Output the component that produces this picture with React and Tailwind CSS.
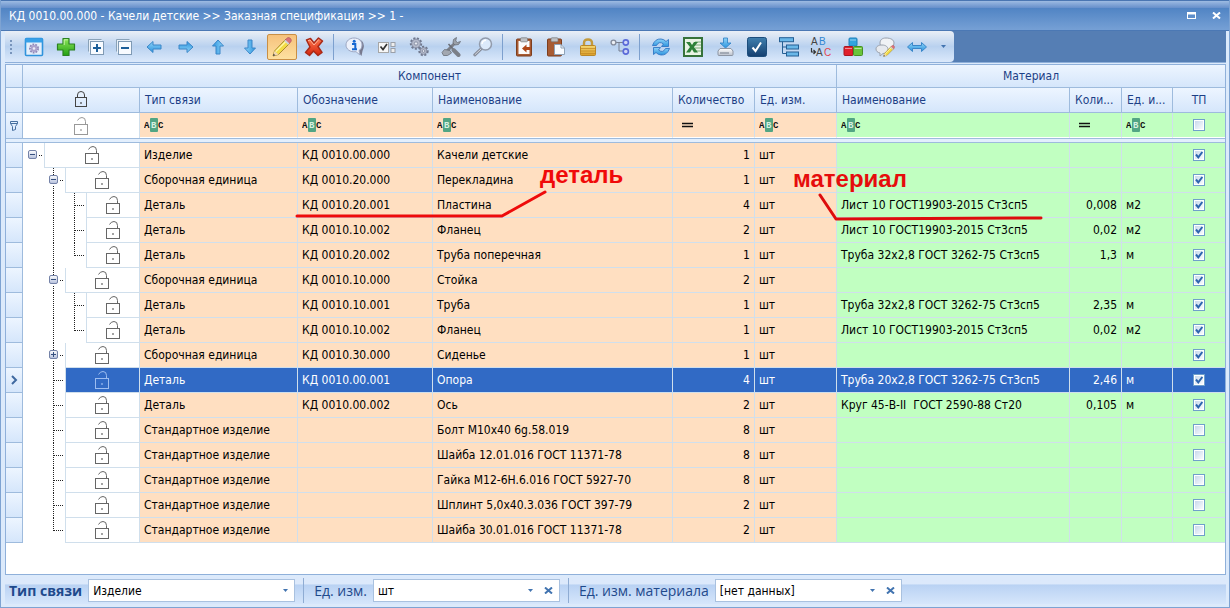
import React, { useState } from "react";

const COLUMNS = [17, 117, 158, 135, null, 82, 82, 233, 52, 51, 52];

const ROWS = [
  { tree: ["minus0"], type: "Изделие", code: "КД 0010.00.000", name: "Качели детские", qty: 1, done: true },
  { tree: ["blank", "minus"], type: "Сборочная единица", code: "КД 0010.20.000", name: "Перекладина", qty: 1, done: true },
  { tree: ["blank", "line", "tee"], type: "Деталь", code: "КД 0010.20.001", name: "Пластина", qty: 4, material: "Лист 10 ГОСТ19903-2015 Ст3сп5", amount: "0,008", unit: "м2", done: true },
  { tree: ["blank", "line", "tee"], type: "Деталь", code: "КД 0010.10.002", name: "Фланец", qty: 2, material: "Лист 10 ГОСТ19903-2015 Ст3сп5", amount: "0,02", unit: "м2", done: true },
  { tree: ["blank", "line", "elbow"], type: "Деталь", code: "КД 0010.20.002", name: "Труба поперечная", qty: 1, material: "Труба 32x2,8 ГОСТ 3262-75 Ст3сп5", amount: "1,3", unit: "м", done: true },
  { tree: ["blank", "minus"], type: "Сборочная единица", code: "КД 0010.10.000", name: "Стойка", qty: 2, done: true },
  { tree: ["blank", "line", "tee"], type: "Деталь", code: "КД 0010.10.001", name: "Труба", qty: 1, material: "Труба 32x2,8 ГОСТ 3262-75 Ст3сп5", amount: "2,35", unit: "м", done: true },
  { tree: ["blank", "line", "elbow"], type: "Деталь", code: "КД 0010.10.002", name: "Фланец", qty: 1, material: "Лист 10 ГОСТ19903-2015 Ст3сп5", amount: "0,02", unit: "м2", done: true },
  { tree: ["blank", "plus"], type: "Сборочная единица", code: "КД 0010.30.000", name: "Сиденье", qty: 1, done: true },
  { tree: ["blank", "tee"], type: "Деталь", code: "КД 0010.00.001", name: "Опора", qty: 4, material: "Труба 20x2,8 ГОСТ 3262-75 Ст3сп5", amount: "2,46", unit: "м", done: true },
  { tree: ["blank", "tee"], type: "Деталь", code: "КД 0010.00.002", name: "Ось", qty: 2, material: "Круг 45-В-II  ГОСТ 2590-88 Ст20", amount: "0,105", unit: "м", done: true },
  { tree: ["blank", "tee"], type: "Стандартное изделие", name: "Болт М10x40 6g.58.019", qty: 8 },
  { tree: ["blank", "tee"], type: "Стандартное изделие", name: "Шайба 12.01.016 ГОСТ 11371-78", qty: 8 },
  { tree: ["blank", "tee"], type: "Стандартное изделие", name: "Гайка М12-6H.6.016 ГОСТ 5927-70", qty: 8 },
  { tree: ["blank", "tee"], type: "Стандартное изделие", name: "Шплинт 5,0x40.3.036 ГОСТ 397-79", qty: 2 },
  { tree: ["blank", "elbow"], type: "Стандартное изделие", name: "Шайба 30.01.016 ГОСТ 11371-78", qty: 2 },
];

const Gradients = () => (
  <svg width="0" height="0" className="absolute" aria-hidden="true">
    <defs>
      <linearGradient id="blue" x1="0" y1="0" x2="0" y2="1">
        <stop offset="0" stopColor="#8fd4f8" />
        <stop offset="1" stopColor="#2b93de" />
      </linearGradient>
      <linearGradient id="green" x1="0" y1="0" x2="0" y2="1">
        <stop offset="0" stopColor="#8ee65a" />
        <stop offset="1" stopColor="#22a012" />
      </linearGradient>
      <linearGradient id="red" x1="0" y1="0" x2="0" y2="1">
        <stop offset="0" stopColor="#ff7a52" />
        <stop offset="1" stopColor="#d4240c" />
      </linearGradient>
      <linearGradient id="gold" x1="0" y1="0" x2="0" y2="1">
        <stop offset="0" stopColor="#f5d873" />
        <stop offset="1" stopColor="#d99d28" />
      </linearGradient>
      <linearGradient id="navy" x1="0" y1="0" x2="0" y2="1">
        <stop offset="0" stopColor="#3f7fae" />
        <stop offset="1" stopColor="#143f70" />
      </linearGradient>
      <linearGradient id="silver" x1="0" y1="0" x2="0" y2="1">
        <stop offset="0" stopColor="#ffffff" />
        <stop offset="1" stopColor="#b9c0cc" />
      </linearGradient>
      <linearGradient id="knob" x1="0" y1="0" x2="0" y2="1">
        <stop offset="0" stopColor="#ffffff" />
        <stop offset="1" stopColor="#b4bfdc" />
      </linearGradient>
    </defs>
  </svg>
);

const Icon = ({ children }) => (
  <svg width="20" height="20" viewBox="0 0 20 20" fill="none" aria-hidden="true">
    {children}
  </svg>
);

const ARROW = "M3 10 L9 4.5 V8 H17 V12 H9 V15.500 Z";

const Arrow = ({ turn }) => (
  <Icon>
    <path d={ARROW} transform={`rotate(${turn} 10 10)`} fill="url(#blue)" stroke="#3a86c8" strokeLinejoin="round" />
  </Icon>
);

const Gear = ({ x, y, r }) => (
  <g>
    <circle cx={x} cy={y} r={r} stroke="#70788e" strokeWidth="2.4" strokeDasharray="2 1.4" />
    <circle cx={x} cy={y} r={r - 0.6} fill="#b3b9ca" stroke="#7c849a" strokeWidth="0.8" />
    <circle cx={x} cy={y} r={r / 3} fill="#e8ebf2" stroke="#7c849a" strokeWidth="0.8" />
  </g>
);

const Stack = ({ plus }) => (
  <Icon>
    <path d="M2.500 14.500 V2.500 H15.500" stroke="#8aa2b8" />
    <rect x="3" y="3" width="13" height="13" fill="#e8f0f8" />
    <rect x="4.500" y="4.500" width="13" height="13" fill="#f8fbff" stroke="#7f9ab4" />
    <path d={plus ? "M7 11 H15 M11 7 V15" : "M7 11 H15"} stroke="#1d5f99" strokeWidth="2" />
  </Icon>
);

const Pencil = ({ small }) => (
  <g transform={small ? "translate(8 8) scale(0.6)" : undefined}>
    <path d="M1 19 L2.500 14 L14 2 L18 6 L6.500 17.500 Z" fill="#f3dc45" stroke="#94741f" strokeWidth="0.8" />
    <path d="M3.800 14.500 L14.800 3.500" stroke="#fff6a8" strokeWidth="1.400" />
    <path d="M13 3 L15.500 0.800 Q17 0 18.500 1.500 Q20 3 19 4.500 L17 7 Z" fill="#dc7078" stroke="#a95458" strokeWidth="0.6" />
    <path d="M12.200 3.900 L13.400 2.700 L17.500 6.500 L16.200 7.800 Z" fill="#cdd2d8" />
    <path d="M1 19 L2.500 14 L6.500 17.500 Z" fill="#f2d8b0" />
    <path d="M1 19 L1.600 16.800 L3.300 18.300 Z" fill="#333" />
  </g>
);

const TOOLS = [
  [
    {
      label: "Настройка",
      icon: (
        <Icon>
          <rect x="1.500" y="1.500" width="17" height="17" rx="1" fill="#e4effb" stroke="#2f93dc" strokeWidth="1.600" />
          <rect x="1.500" y="1.500" width="17" height="4" fill="#37a0e8" />
          <circle cx="10" cy="11.500" r="4" stroke="#8f87b8" strokeWidth="2" strokeDasharray="1.800 1" />
          <circle cx="10" cy="11.500" r="3.400" fill="#aaa2cc" />
          <circle cx="10" cy="11.500" r="1.300" fill="#eeeef8" />
        </Icon>
      ),
    },
    {
      label: "Добавить",
      icon: (
        <Icon>
          <path d="M7 1.500 H13 V7 H18.500 V13 H13 V18.500 H7 V13 H1.500 V7 H7 Z" fill="url(#green)" stroke="#2b8220" strokeLinejoin="round" strokeWidth="1.200" />
          <path d="M8.200 8 V2.800 H11.800" stroke="#c4f5a4" />
        </Icon>
      ),
    },
    { label: "Развернуть", narrow: true, icon: <Stack plus /> },
    { label: "Свернуть", narrow: true, icon: <Stack /> },
    { label: "Влево", icon: <Arrow turn={0} /> },
    { label: "Вправо", icon: <Arrow turn={180} /> },
    { label: "Вверх", icon: <Arrow turn={90} /> },
    { label: "Вниз", icon: <Arrow turn={270} /> },
    { label: "Редактировать", active: true, icon: <Icon><Pencil /></Icon> },
    {
      label: "Удалить",
      icon: (
        <Icon>
          <path d="M2.500 3 L6.500 1.500 L10 6 L14.500 1 L18.500 4 L14 9.500 L18 15.500 L14 18.500 L9.500 14 L5.500 18.500 L1.500 15.500 L6 10 Z" fill="url(#red)" stroke="#a92a18" strokeWidth="1.500" strokeLinejoin="round" />
          <path d="M4 3.700 L6 3 L10 8 L14.700 2.600" stroke="#ffb49a" />
        </Icon>
      ),
    },
  ],
  [
    {
      label: "Информация",
      icon: (
        <Icon>
          <path d="M13 15 L16.500 19 L17.500 14 Q20.500 8 17 4 Q15 2 12 2" fill="#77798e" />
          <path d="M9 1 C14 1 17 4 17 8 C17 11 15.500 12.500 14 13.500 L15 18 L11 14.700 C5 15.500 1 12 1 8 C1 4 4.500 1 9 1 Z" fill="#edf1fb" stroke="#9da7c2" />
          <circle cx="9.200" cy="4.200" r="1.500" fill="#1768d2" />
          <path d="M7 7 H10.300 V12 M7 12.300 H12" stroke="#1768d2" strokeWidth="2" />
        </Icon>
      ),
    },
    {
      label: "Варианты",
      icon: (
        <Icon>
          <rect x="1.500" y="5.500" width="10" height="10" fill="#f7f7f7" stroke="#a6a6a6" />
          <path d="M3.500 9.500 L6 12.500 L10 7" stroke="#333" strokeWidth="1.700" />
          <rect x="14" y="5.500" width="4" height="4" fill="#eee" stroke="#9a9fa8" />
          <rect x="14" y="11.500" width="4" height="4" fill="#eee" stroke="#9a9fa8" />
        </Icon>
      ),
    },
    { label: "Параметры", icon: <Icon><Gear x={7} y={6.500} r={5} /><Gear x={14.500} y={14} r={4} /></Icon> },
    {
      label: "Инструменты",
      icon: (
        <Icon>
          <path d="M6 14 L14.500 5.500" stroke="#7b7f88" strokeWidth="3" />
          <path d="M15.500 0.500 L12.500 2.500 L12 6 L14 8 L17.500 7.500 L19.500 4.500 L16.500 5.500 L14.700 4 Z" fill="#9aa0a9" stroke="#686d76" strokeWidth="0.8" />
          <path d="M7.500 7 L17 17.500" stroke="#696d75" strokeWidth="1.500" />
          <path d="M12.500 13 L17.500 18" stroke="#7a7f88" strokeWidth="4" strokeLinecap="round" />
          <path d="M1 15.500 L3.500 12.500 L9 13.500 L10.500 16 L6.500 18.500 L2.500 18.500 Z" fill="#a2a7b0" stroke="#686d76" strokeWidth="0.8" />
        </Icon>
      ),
    },
    {
      label: "Найти",
      icon: (
        <Icon>
          <path d="M8.500 11.500 L1.800 17.800" stroke="#858b98" strokeWidth="3" strokeLinecap="round" />
          <path d="M8.500 11.500 L1.800 17.800" stroke="#d5d9e1" />
          <circle cx="12.500" cy="7" r="6" fill="#dceafb" stroke="#929bab" strokeWidth="1.500" />
          <path d="M9 7 Q9.500 3.500 13 3.300" stroke="#fff" strokeWidth="1.400" />
        </Icon>
      ),
    },
  ],
  [
    {
      label: "Вставить из",
      icon: (
        <Icon>
          <rect x="2.500" y="2" width="15" height="17" rx="1" fill="#a85b33" stroke="#7d3e1e" />
          <rect x="4.500" y="4" width="11" height="13" fill="#fbfbfb" />
          <rect x="6.500" y="0.800" width="7" height="4" rx="1" fill="#bfc2c6" stroke="#777" strokeWidth="0.7" />
          <path d="M8 11.500 L12.500 7.500 V10 H16.500 V13 H12.500 V15.500 Z" fill="#b04616" />
        </Icon>
      ),
    },
    {
      label: "Вставить",
      icon: (
        <Icon>
          <rect x="1.500" y="2" width="14" height="17" rx="1" fill="#a85b33" stroke="#7d3e1e" />
          <rect x="5" y="0.800" width="7" height="4" rx="1" fill="#bfc2c6" stroke="#777" strokeWidth="0.7" />
          <path d="M8.500 7.500 H15 L18.500 11 V17.500 H8.500 Z" fill="#f8fbff" stroke="#8fa3b8" />
          <path d="M15 7.500 V11 H18.500" stroke="#8fa3b8" />
        </Icon>
      ),
    },
    {
      label: "Заблокировать",
      icon: (
        <Icon>
          <path d="M6 9 V6 Q6 2.500 10 2.500 Q14 2.500 14 6 V9" stroke="#c39a3c" strokeWidth="2.400" />
          <rect x="2.500" y="8.500" width="15" height="10" rx="1" fill="url(#gold)" stroke="#b98628" />
          <path d="M3 11.500 H17 M3 14 H17 M3 16.500 H17" stroke="#c58c25" strokeWidth="0.8" />
        </Icon>
      ),
    },
    {
      label: "Связи",
      icon: (
        <Icon>
          <path d="M5 5.500 H13 M9 5.500 V14 H13" stroke="#777f90" />
          <circle cx="3.500" cy="5.500" r="2.400" fill="#eef1f6" stroke="#858c9c" strokeWidth="1.400" />
          <circle cx="15.800" cy="5.500" r="2.600" fill="#cfd6f8" stroke="#5a6ad8" strokeWidth="1.600" />
          <circle cx="15.800" cy="14.500" r="2.600" fill="#cfd6f8" stroke="#5a6ad8" strokeWidth="1.600" />
        </Icon>
      ),
    },
  ],
  [
    {
      label: "Обновить",
      icon: (
        <Icon>
          <path d="M1.500 8.500 Q4 1.500 10 2 Q13 2.200 15 4.500 L17.500 2.500 V9.500 H10.500 L12.500 7 Q8 3.500 5.500 8.500 Z" fill="url(#blue)" stroke="#3277c4" strokeWidth="0.9" />
          <path d="M18.500 11.500 Q16 18.500 10 18 Q7 17.800 5 15.500 L2.500 17.500 V10.500 H9.500 L7.500 13 Q12 16.500 14.500 11.500 Z" fill="url(#blue)" stroke="#3277c4" strokeWidth="0.9" />
        </Icon>
      ),
    },
    {
      label: "Экспорт в Excel",
      icon: (
        <Icon>
          <rect x="1" y="1" width="18" height="18" fill="#e9f3e4" stroke="#36723a" strokeWidth="2" />
          <path d="M12 5 H18 M12 8 H18 M12 11 H18 M12 14 H18" stroke="#79a878" />
          <path d="M3 5 H7 L9 8 L11 5 H15 L11 10 L15 15.500 H11 L9 12.300 L7 15.500 H3 L7 10 Z" fill="#2d8038" />
        </Icon>
      ),
    },
    {
      label: "Загрузить",
      icon: (
        <Icon>
          <path d="M8.500 1 H12.500 V6 H16 L10.500 11 L5 6 H8.500 Z" fill="url(#blue)" stroke="#2b7fc4" strokeWidth="0.8" />
          <path d="M5 11.500 H16 L18 14 V17.500 Q18 18.500 17 18.500 H4 Q3 18.500 3 17.500 V14 Z" fill="url(#silver)" stroke="#8d95a3" />
          <path d="M5 16 H14" stroke="#8d95a3" strokeWidth="1.400" />
        </Icon>
      ),
    },
    {
      label: "Проверить",
      icon: (
        <Icon>
          <rect x="0.5" y="0.5" width="19" height="19" rx="2" fill="url(#navy)" stroke="#1c4d7c" />
          <path d="M5.500 10.500 L8.500 14 L14 5.500" stroke="#fff" strokeWidth="2" />
        </Icon>
      ),
    },
    {
      label: "Структура",
      icon: (
        <Icon>
          <path d="M3.500 4 V16.500 H7 M3.500 10 H7" stroke="#245f94" />
          <rect x="0.5" y="0.7" width="14" height="4" fill="#69b7e8" stroke="#245f94" />
          <rect x="7.500" y="8" width="12" height="4" fill="#69b7e8" stroke="#245f94" />
          <rect x="7.500" y="15" width="12" height="4" fill="#69b7e8" stroke="#245f94" />
        </Icon>
      ),
    },
    {
      label: "Заменить",
      icon: (
        <svg width="22" height="24" viewBox="0 0 22 24" className="font-['Liberation_Sans']" aria-hidden="true">
          <text x="1" y="10" fontSize="10" fill="#444">A</text>
          <text x="9" y="10" fontSize="10" fill="#2e86d0">B</text>
          <text x="6" y="21" fontSize="10" fill="#444">A</text>
          <text x="14" y="21" fontSize="10" fill="#e0454e">C</text>
          <path d="M1.500 13 V17 H5 M3.500 15 L5.500 17 L3.500 19" fill="none" stroke="#333" strokeWidth="1.200" />
        </svg>
      ),
    },
    {
      label: "Объекты",
      icon: (
        <Icon>
          <rect x="6" y="1" width="8" height="8" rx="1" fill="#31a4e0" stroke="#2180b8" />
          <rect x="1" y="9.500" width="9" height="9" rx="1" fill="#e0202c" stroke="#a81520" />
          <rect x="10.500" y="9.500" width="9" height="9" rx="1" fill="#6ac43a" stroke="#478f24" />
          <path d="M7 3 H13 M2 11.500 H9 M11.500 11.500 H18.500" stroke="#fff" strokeOpacity="0.5" />
        </Icon>
      ),
    },
    {
      label: "Комментарий",
      icon: (
        <Icon>
          <path d="M11 1 C16 1 19 3 19 6 C19 9 17 10.500 15 11 L15 14 L11 11 C7 11 5 9 5 6 C5 3 7 1 11 1 Z" fill="#f0f2f5" stroke="#9aa1ac" />
          <path d="M7 8 C11 8 13 10 13 12.500 C13 15 11 16.500 8 16.500 L5 19 V16 C2.500 15.500 1 14 1 12 C1 9.500 3.500 8 7 8 Z" fill="#e6e9ee" stroke="#9aa1ac" />
          <Pencil small />
        </Icon>
      ),
    },
    {
      label: "По ширине",
      icon: (
        <Icon>
          <path d="M0.500 10 L5.500 5.500 V8.500 H14.500 V5.500 L19.500 10 L14.500 14.500 V11.500 H5.500 V14.500 Z" fill="url(#blue)" stroke="#3a86c8" strokeLinejoin="round" />
        </Icon>
      ),
    },
  ],
];

const Caret = () => (
  <svg width="5" height="3" viewBox="0 0 5 3" aria-hidden="true">
    <path d="M0 0 H5 L2.500 3 Z" fill="#4274b0" />
  </svg>
);

const Cross = () => (
  <svg width="9" height="7" viewBox="0 0 9 7" aria-hidden="true">
    <path d="M1 0.500 L8 6.500 M8 0.500 L1 6.500" stroke="currentColor" strokeWidth="2" />
  </svg>
);

const Lock = ({ open, className = "" }) => (
  <svg width="15" height="20" viewBox="0 0 15 20" fill="none" stroke="currentColor" className={className} aria-hidden="true">
    {open ? (
      <>
        <path d="M3.500 4.500 Q5 1.500 8 1.500 Q11.500 1.500 11.500 5.500 V8" />
        <rect x="0.500" y="8.500" width="13" height="10" />
        <rect x="6" y="13" width="2" height="2" fill="currentColor" stroke="none" opacity="0.6" />
      </>
    ) : (
      <>
        <path d="M3.500 8 V5 Q3.500 1.500 7 1.500 Q10.500 1.500 10.500 5 V8" />
        <rect x="1.500" y="7.500" width="11" height="9" />
        <rect x="6" y="12" width="2" height="2" fill="currentColor" stroke="none" opacity="0.6" />
      </>
    )}
  </svg>
);

const Branch = ({ kind }) => {
  const dots = { stroke: "#222", strokeDasharray: "1 1" };
  const knob = kind === "minus" || kind === "plus" || kind === "minus0";
  return (
    <svg width="21" height="25" viewBox="0 0 21 25" fill="none" className="shrink-0" aria-hidden="true">
      {["line", "tee", "minus", "plus"].includes(kind) && <path d="M9.500 0 V25" {...dots} />}
      {kind === "elbow" && <path d="M9.500 0 V13" {...dots} />}
      {(kind === "tee" || kind === "elbow") && <path d="M10 12.500 H19" {...dots} />}
      {knob && (
        <>
          <path d="M16 12.500 H20" {...dots} />
          <rect x="4" y="7" width="11" height="10" fill="#fff" />
          <rect x="5.500" y="7.500" width="8" height="8" rx="1.500" fill="url(#knob)" stroke="#7482a8" />
          <path d={kind === "plus" ? "M7 11.500 H12 M9.500 9 V14" : "M7 11.500 H12"} stroke="#36507f" />
        </>
      )}
    </svg>
  );
};

const Checkbox = ({ label, checked, onChange }) => (
  <label className="grid place-items-center">
    <input
      type="checkbox"
      aria-label={label}
      checked={checked}
      onChange={onChange}
      className="col-start-1 row-start-1 size-3 appearance-none border border-[#6f9fcb] bg-linear-to-br from-[#c3d5ea] to-white peer shadow-[inset_0_0_0_1px_white]"
    />
    <svg width="12" height="12" viewBox="0 0 12 12" fill="none" className="invisible col-start-1 row-start-1 peer-checked:visible" aria-hidden="true">
      <path d="M3 5.500 L5.300 8.300 L9.300 3" stroke="#2d65ae" strokeWidth="2" />
    </svg>
  </label>
);

const HeadCell = ({ children, className = "h-[25px]", ...rest }) => (
  <th
    scope="col"
    className={`truncate border-r border-b border-[#9ebbdd] bg-linear-to-b from-[#edf5ff] to-[#d5e6fb] px-[5px] text-left font-normal text-[#1c3f86] last:border-r-0 ${className}`}
    {...rest}
  >
    {children}
  </th>
);

const Filter = ({ label, equals, className }) => (
  <td className={`border-r border-b border-r-[#d0dfec] border-b-white px-1 ${className}`}>
    <div className="flex items-center">
      <button type="button" aria-label={`Условие: ${label}`} className="shrink-0">
        {equals ? (
          <svg width="20" height="14" viewBox="0 0 20 14" aria-hidden="true">
            <path d="M5 5.500 H16 M5 8.500 H16" stroke="#111" strokeWidth="1.500" />
          </svg>
        ) : (
          <svg width="20" height="14" viewBox="0 0 20 14" className="font-['Liberation_Mono'] font-bold" aria-hidden="true">
            <rect x="6" y="0" width="8" height="14" rx="1" fill="#52a584" />
            <text x="0" y="10" fontSize="9" fill="#111">A</text>
            <text x="7" y="10" fontSize="9" fill="#d8f0e0">B</text>
            <text x="14" y="10" fontSize="9" fill="#111">C</text>
          </svg>
        )}
      </button>
      <input type="text" aria-label={`Фильтр: ${label}`} className="w-0 min-w-0 flex-1 bg-transparent outline-none" />
    </div>
  </td>
);

const Row = ({ row, selected, onSelect, onToggle }) => {
  const cell = "truncate border-r border-b border-[#d0dfec] px-1 whitespace-pre";
  const left = selected ? "bg-[#316ac5] text-white" : "bg-[#ffdfc1]";
  const right = selected ? "bg-[#316ac5] text-white" : "bg-[#c1ffc1]";
  return (
    <tr onClick={onSelect}>
      <td className="h-[25px] border-r border-b border-[#9ebbdd] bg-linear-to-b from-[#edf5ff] to-[#d5e6fb]">
        {selected && (
          <svg width="16" height="12" viewBox="0 0 16 12" fill="none" aria-hidden="true">
            <path d="M6 2 L10 6 L6 10" stroke="#3f69a0" strokeWidth="2" />
          </svg>
        )}
      </td>
      <td className="border-r border-[#d0dfec]">
        <div className="flex">
          {row.tree.map((kind, i) => (
            <Branch key={i} kind={kind} />
          ))}
          <div className={`flex h-[25px] flex-1 items-center justify-center border-b border-l border-[#d0dfec] ${selected ? "bg-[#316ac5] text-[#9dbdf0]" : "bg-white text-[#666]"}`}>
            <Lock open />
          </div>
        </div>
      </td>
      <td className={`${cell} ${left}`}>{row.type}</td>
      <td className={`${cell} ${left}`}>{row.code}</td>
      <td className={`${cell} ${left}`}>{row.name}</td>
      <td className={`${cell} ${left} text-right`}>{row.qty}</td>
      <td className={`${cell} ${left}`}>шт</td>
      <td className={`${cell} ${right}`}>{row.material}</td>
      <td className={`${cell} ${right} text-right`}>{row.amount}</td>
      <td className={`${cell} ${right}`}>{row.unit}</td>
      <td className={`border-b border-[#d0dfec] ${right}`}>
        <Checkbox label={`ТП: ${row.name}`} checked={!!row.done} onChange={onToggle} />
      </td>
    </tr>
  );
};

const Picker = ({ id, label, value, bold, clearable, className }) => (
  <div className="flex items-center">
    <label htmlFor={id} className={`mr-1.5 font-['Open_Sans'] text-sm text-[#1f4a8c] ${bold ? "font-bold" : ""}`}>
      {label}
    </label>
    <div className={`flex h-[23px] items-center border border-[#a9c1df] bg-white ${className}`}>
      <div className="relative flex h-full flex-1 items-center">
        <select id={id} defaultValue={value} className="h-full w-full appearance-none bg-transparent px-1 text-black outline-none">
          <option>{value}</option>
        </select>
        <span className="pointer-events-none absolute right-1.5">
          <Caret />
        </span>
      </div>
      {clearable && (
        <button type="button" aria-label={`Очистить: ${label}`} className="flex w-5 justify-center text-[#4274b0]">
          <Cross />
        </button>
      )}
    </div>
  </div>
);

const App = () => {
  const [rows, setRows] = useState(ROWS);
  const [selected, setSelected] = useState(9);
  const [filterDone, setFilterDone] = useState(false);

  const toggle = (index) => {
    setRows(rows.map((row, i) => (i === index ? { ...row, done: !row.done } : row)));
  };

  return (
    <div className="flex min-h-screen flex-col border border-t-0 border-[#7ea3d2] bg-[#dceafb] font-['DejaVu_Sans_Condensed','Noto_Sans',sans-serif] text-xs leading-4 text-black">
      <Gradients />

      {/* Title bar */}
      <header className="border-b border-[#4b78b4] bg-[#5c8bc8]">
        <div className="h-2 border-t border-[#4a76b2] bg-linear-to-b from-[#9dbbe2] to-[#668fca]" />
        <div className="flex h-[22px] items-center bg-linear-to-b from-[#5084c4] to-[#76a0d5] pr-2 pl-2 text-white">
          <h1 className="flex-1 pb-1.5">КД 0010.00.000 - Качели детские &gt;&gt; Заказная спецификация &gt;&gt; 1 -</h1>
          <button type="button" aria-label="Развернуть окно" className="mr-4 pb-2">
            <svg width="9" height="7" viewBox="0 0 9 7" fill="none" aria-hidden="true">
              <rect x="0.500" y="0.500" width="8" height="6" stroke="#fff" />
              <path d="M0 1.500 H9" stroke="#fff" strokeWidth="2" />
            </svg>
          </button>
          <button type="button" aria-label="Закрыть" className="pb-2">
            <Cross />
          </button>
        </div>
      </header>

      <div className="flex flex-1 flex-col pr-[3px] pl-1">
        {/* Toolbar */}
        <div className="flex h-8 border-b border-[#8fb0da] bg-[#557eb4]">
          <div className="flex h-[31px] items-center rounded-r bg-linear-to-b from-[#eaeff6] from-0% via-[#b9d1ef] via-50% to-[#dbe9fb] to-100% pr-2 pl-1">
            <svg width="9" height="16" viewBox="0 0 9 16" aria-hidden="true">
              <path d="M1 1 H3 V3 H1 Z M1 5 H3 V7 H1 Z M1 9 H3 V11 H1 Z M1 13 H3 V15 H1 Z" fill="#7894bb" />
            </svg>
            {TOOLS.map((group, i) => (
              <React.Fragment key={i}>
                {i > 0 && <span className="mr-[5px] ml-[3px] h-[26px] w-px bg-[#7da0ce]" />}
                {group.map((tool) => (
                  <button
                    key={tool.label}
                    type="button"
                    aria-label={tool.label}
                    className={`flex h-[26px] items-center justify-center ${tool.narrow ? "w-7" : "w-8"}`}
                  >
                    <span
                      className={
                        tool.active
                          ? "flex h-[26px] w-[30px] items-center justify-center rounded-xs border border-[#c98f45] bg-linear-to-b from-[#f6c27c] to-[#fde0a0]"
                          : "flex"
                      }
                    >
                      {tool.icon}
                    </span>
                  </button>
                ))}
              </React.Fragment>
            ))}
            <button type="button" aria-label="Ещё" className="ml-2">
              <Caret />
            </button>
          </div>
        </div>

        {/* Specification tree */}
        <main className="relative mt-px flex-1 border border-[#8fb0da] bg-white">
          <table className="w-full table-fixed border-separate border-spacing-0">
            <colgroup>
              {COLUMNS.map((width, i) => (
                <col key={i} style={width ? { width } : undefined} />
              ))}
            </colgroup>
            <thead>
              <tr>
                <HeadCell className="h-[23px]" />
                <HeadCell colSpan={6} className="h-[23px]"><span className="block text-center">Компонент</span></HeadCell>
                <HeadCell colSpan={4} className="h-[23px]"><span className="block text-center">Материал</span></HeadCell>
              </tr>
              <tr>
                <HeadCell />
                <HeadCell aria-label="Блокировка"><Lock className="mx-auto text-[#444]" /></HeadCell>
                <HeadCell>Тип связи</HeadCell>
                <HeadCell>Обозначение</HeadCell>
                <HeadCell>Наименование</HeadCell>
                <HeadCell>Количество</HeadCell>
                <HeadCell>Ед. изм.</HeadCell>
                <HeadCell>Наименование</HeadCell>
                <HeadCell>Коли...</HeadCell>
                <HeadCell>Ед. и...</HeadCell>
                <HeadCell><span className="block text-center">ТП</span></HeadCell>
              </tr>
              <tr>
                <td className="h-[25px] border-r border-[#9ebbdd] bg-linear-to-b from-[#edf5ff] to-[#d5e6fb]">
                  <svg width="16" height="12" viewBox="0 0 16 12" fill="none" aria-hidden="true">
                    <path d="M4.500 1.500 H11.500 V3.500 L9.500 6.500 V9.500 L6.500 10.500 V6.500 L4.500 3.500 Z M4.500 3.500 H11.500" stroke="#466f9f" />
                  </svg>
                </td>
                <td className="border-r border-[#d0dfec] text-[#999]"><Lock open className="mx-auto" /></td>
                <Filter label="Тип связи" className="bg-[#ffdfc1]" />
                <Filter label="Обозначение" className="bg-[#ffdfc1]" />
                <Filter label="Наименование" className="bg-[#ffdfc1]" />
                <Filter label="Количество" equals className="bg-[#ffdfc1]" />
                <Filter label="Ед. изм." className="bg-[#ffdfc1]" />
                <Filter label="Наименование материала" className="bg-[#c1ffc1]" />
                <Filter label="Количество материала" equals className="bg-[#c1ffc1]" />
                <Filter label="Ед. изм. материала" className="bg-[#c1ffc1]" />
                <td className="border-b border-white bg-[#c1ffc1]">
                  <Checkbox label="Фильтр: ТП" checked={filterDone} onChange={() => setFilterDone(!filterDone)} />
                </td>
              </tr>
              <tr>
                <td colSpan={11} className="h-[5px] border-y border-[#9ebbdd] bg-[#e3effd]" />
              </tr>
            </thead>
            <tbody>
              {rows.map((row, i) => (
                <Row key={i} row={row} selected={i === selected} onSelect={() => setSelected(i)} onToggle={() => toggle(i)} />
              ))}
            </tbody>
          </table>

          {/* Callouts over the table */}
          <svg
            width="1100"
            height="180"
            viewBox="0 0 1100 180"
            fill="none"
            className="pointer-events-none absolute top-0 left-0 font-['Liberation_Sans'] font-bold"
          >
            <path d="M291 151 H496 L539 127" stroke="#ee0b0b" strokeWidth="3" strokeLinecap="round" strokeLinejoin="round" />
            <path d="M814 130 L830 154 L1035 153" stroke="#dd0d0d" strokeWidth="3" strokeLinecap="round" strokeLinejoin="round" />
            <text x="534" y="118" fontSize="24" fill="#f00a0a">деталь</text>
            <text x="787" y="122" fontSize="24" fill="#e60c0c">материал</text>
          </svg>
        </main>

        {/* Status bar */}
        <footer className="mt-0.5 mb-[3px] flex h-[27px] items-center bg-linear-to-b from-[#dce9fb] from-25% via-[#b9d2f3] via-30% to-[#d6e6fb] pl-1">
          <Picker id="link-type" label="Тип связи" value="Изделие" bold className="w-[207px]" />
          <span className="mr-2.5 ml-2 h-[25px] w-px bg-[#8facd3]" />
          <Picker id="unit" label="Ед. изм." value="шт" clearable className="w-[187px]" />
          <span className="mr-2.5 ml-2 h-[25px] w-px bg-[#8facd3]" />
          <Picker id="material-unit" label="Ед. изм. материала" value="[нет данных]" clearable className="w-[187px]" />
        </footer>
      </div>
    </div>
  );
};

export default App;
